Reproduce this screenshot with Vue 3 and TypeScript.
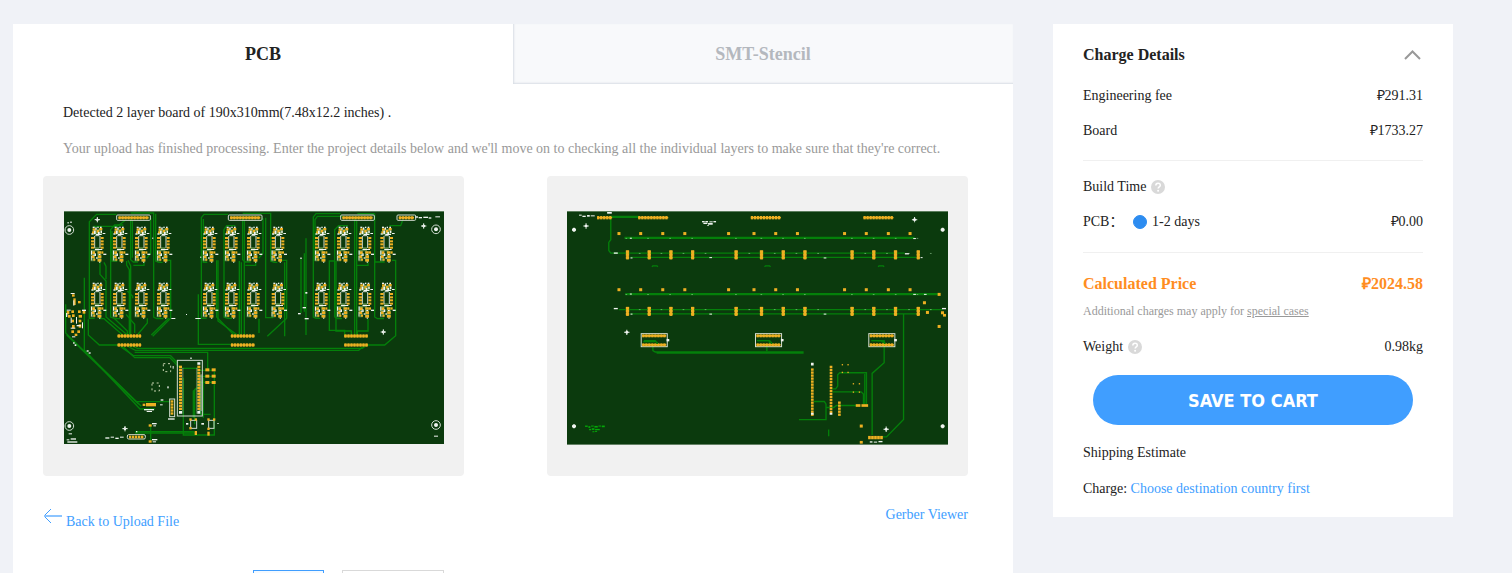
<script setup lang="ts">
import { ref } from 'vue'

type Pad = [number, number, number, number]

const tab = ref('pcb')
const buildTime = ref('fast')

const range = (n: number): number[] => Array.from({ length: n }, (_, i) => i)

// Positions of the repeated driver cells on the top layer
const cellCols = [100, 166, 232, 298, 436, 502, 568, 642, 772, 838, 903, 968]
const cells = [47, 215].flatMap((y) => cellCols.map((x) => ({ x, y })))
const cellPads: Pad[] = [
  [-14, 5, 9, 7], [-2, 10, 7, 8], [6, 4, 9, 7], [-16, 14, 6, 7],
  [-19, 31, 10, 6], [-19, 41, 10, 6], [-19, 50, 10, 6], [-19, 60, 10, 6],
  [10, 31, 9, 6], [10, 41, 9, 6], [10, 50, 9, 6], [10, 60, 9, 6],
  [-15, 74, 8, 8], [-17, 86, 8, 8], [-12, 96, 6, 6],
  [1, 74, 10, 7], [2, 86, 10, 8], [1, 97, 11, 8], [12, 74, 6, 7],
]
const cellSilk: Pad[] = [
  [-14, 0, 6, 4], [-6, 2, 4, 7], [-10, 12, 5, 10], [0, 0, 4, 4], [8, 0, 5, 4],
  [2, 16, 5, 6], [10, 12, 4, 7], [-4, 22, 17, 3], [-18, 20, 6, 4],
  [16, 19, 8, 3], [-7, 67, 22, 3], [-19, 72, 3, 12], [-19, 88, 2, 13],
  [-8, 80, 4, 8], [-4, 92, 5, 4], [18, 81, 9, 4], [4, 82, 5, 3], [-12, 84, 5, 3], [5, 105, 4, 3],
]
const headers = [
  { x: 158, n: 11 }, { x: 493, n: 11 }, { x: 830, n: 11 }, { x: 999, n: 6 },
]
const strips = [160, 500, 840]

const topTraces = [
  'M158 10H98L76 32V322H92', 'M73 325V372L106 402H163', 'M88 46H160L184 28',
  'M178 42H152L140 56V318L152 323H168', 'M144 60V150H160', 'M200 24V146L208 153H222', 'M205 28V140',
  'M260 20V126L248 142', 'M200 6H269V318L278 323H298', 'M275 8V150L284 154H296',
  'M298 148H320V322L266 376', 'M314 322L262 372', 'M108 150V190L126 210V318L190 372', 'M120 154L126 166V205',
  'M188 150V162L196 176V372', 'M192 148L200 165V372', 'M240 153V163H208', 'M80 249H88', 'M190 240L206 256V262',
  'M186 310L212 340V366', 'M250 322V336L220 372', 'M152 323L190 360V372', 'M403 250V400H500', 'M105 323H120L176 372',
  'M493 10H420L412 20V322H428', 'M418 24V154H430', 'M514 44H488L480 56V318L490 322H504', 'M536 20V146L544 153H560', 'M541 28V372',
  'M597 22V126L584 142', 'M536 7H620V150L630 154H640', 'M605 20V320H628', 'M649 148H668V322L610 376', 'M662 154V376',
  'M458 148V318L510 372', 'M462 148V330L520 372', 'M526 150V372', 'M532 154V372', 'M575 153V163H544', 'M585 323V366',
  'M726 82V372', 'M721 127V302', 'M711 142V306',
  'M830 8H756L748 18V318L756 322H768', 'M836 16H760L753 26V150', 'M852 44H824L812 56V318L820 323H834', 'M810 150H796V358H842V372',
  'M816 150V360H862V372', 'M872 24V372', 'M878 30V374', 'M932 8V153H962', 'M932 140V318L940 323H960', 'M880 8H932', 'M912 154V163H878', 'M912 323V360H880V372',
  'M984 148H995V374L962 402H905', 'M1016 28L1010 44H976',
  'M5 280V366L216 572H318', 'M61 200V417L228 594H273', 'M8 372L224 580', 'M67 426L232 586',
  'M205 405L220 412H895L906 404', 'M190 405L214 418H884L896 408', 'M178 407L212 440H318L344 467', 'M170 407L208 434H320L340 455',
  'M212 424H431V477', 'M451 482V672H358V500', 'M213 662H390', 'M213 666H396', 'M260 640V690', 'M388 620V540L402 530V480', 'M392 640V536L404 526',
  'M356 472H402', 'M410 510V610H440', 'M418 500V620', 'M404 478H450M404 496H450M404 514H450',
]
const topPads: Pad[] = [
  [24, 250, 8, 7], [28, 262, 7, 20], [42, 270, 8, 7], [8, 300, 8, 10], [22, 298, 8, 8], [42, 298, 8, 8], [56, 300, 8, 8],
  [12, 312, 8, 8], [24, 310, 8, 8], [44, 312, 10, 8], [22, 326, 8, 8], [44, 326, 8, 8], [24, 342, 8, 10], [44, 340, 8, 10],
  [22, 358, 8, 8], [40, 358, 8, 8], [32, 368, 8, 7],
  [424, 472, 12, 9], [443, 472, 12, 9], [424, 491, 12, 9], [443, 491, 12, 9], [424, 510, 12, 9], [443, 510, 12, 9],
  [236, 578, 8, 7], [246, 576, 30, 10], [254, 640, 9, 7], [254, 688, 9, 7],
  [376, 622, 7, 7], [392, 622, 7, 7], [376, 648, 7, 7], [392, 660, 7, 12], [430, 622, 7, 7], [447, 622, 7, 7], [430, 650, 7, 7], [430, 662, 7, 12],
]
const topSilk: Pad[] = [
  [10, 34, 5, 3], [18, 32, 6, 3], [20, 246, 12, 3], [28, 268, 3, 16], [8, 296, 12, 3], [6, 306, 4, 12], [54, 296, 12, 4],
  [20, 320, 3, 16], [36, 318, 3, 20], [38, 342, 12, 4], [20, 350, 14, 3], [54, 334, 3, 18], [24, 376, 10, 3],
  [27, 394, 5, 4], [32, 400, 5, 5], [68, 418, 6, 4], [74, 424, 6, 4],
  [1054, 16, 8, 4], [1064, 18, 10, 4], [1078, 17, 14, 4], [1094, 19, 8, 4], [1114, 16, 14, 3],
  [724, 243, 6, 5], [716, 288, 10, 4], [702, 306, 8, 4], [722, 321, 12, 4], [708, 140, 6, 3],
  [322, 321, 12, 3], [366, 309, 3, 3], [394, 321, 16, 3], [264, 80, 4, 3], [408, 137, 4, 3],
  [378, 440, 6, 3], [326, 465, 3, 8], [290, 565, 8, 4], [288, 580, 8, 3], [240, 594, 30, 4], [248, 600, 16, 3],
  [124, 679, 12, 4], [140, 677, 10, 3], [154, 680, 10, 4], [168, 677, 11, 3], [8, 685, 8, 3], [20, 682, 16, 4], [10, 691, 30, 4],
  [14, 667, 10, 3], [264, 636, 14, 4], [268, 643, 8, 3], [264, 684, 16, 4], [266, 691, 10, 3], [312, 622, 20, 4],
  [366, 636, 7, 5], [412, 636, 8, 5], [460, 636, 4, 3], [1110, 674, 12, 3], [310, 526, 4, 6], [216, 660, 4, 4],
]

// Bottom layer
const dotXs = [155, 220, 286, 352, 483, 559, 624, 689, 830, 895, 961, 1026]
const barXs = [181, 246, 311, 376, 506, 582, 647, 712, 853, 918, 983, 1051]
const bottomTraces = [
  'M131 19H215M131 16H215', 'M131 22V86L125 94V118L131 126H1010', 'M190 139H1045',
  'M172 79H1040M172 82H1040', 'M174 247H1116M174 250H1116', 'M155 295H1124', 'M190 308H1050', 'M1007 308V624L956 676H940',
  'M257 398V418L264 422H708M268 425H708', 'M598 398V420', 'M928 388H949V454L913 486V670', 'M911 388H940L949 396',
  'M228 391H266', 'M568 388H606V396', 'M794 532H804L810 524V490L816 484H896V578', 'M891 488V580',
  'M794 541H880L887 548V578', 'M738 570H770L775 578V624H694', 'M775 588H798L806 582H870', 'M783 654V674',
]
const bottomPads: Pad[] = [
  [1065, 270, 9, 9], [1109, 245, 9, 9], [1074, 299, 9, 9], [1119, 300, 9, 9], [1125, 308, 9, 8], [1109, 341, 9, 9],
  [864, 578, 14, 8], [881, 578, 20, 8], [876, 639, 9, 9], [876, 688, 9, 8],
  [822, 458, 4, 4], [839, 458, 4, 4], [822, 481, 4, 4], [839, 481, 4, 4], [855, 515, 4, 4], [873, 515, 4, 4], [855, 540, 4, 4], [873, 540, 4, 4],
]
const bottomSilk: Pad[] = [
  [36, 11, 8, 3], [46, 14, 10, 4], [60, 12, 8, 5], [71, 13, 12, 3], [120, 3, 14, 5],
  [404, 30, 8, 4], [414, 30, 8, 4], [426, 31, 10, 3], [438, 30, 8, 4], [408, 35, 12, 4], [422, 36, 14, 5], [420, 42, 4, 3],
  [140, 124, 12, 4], [1011, 126, 12, 4], [140, 290, 12, 4], [1122, 290, 12, 4],
  [190, 139, 6, 3], [426, 138, 8, 3], [768, 139, 8, 3], [190, 307, 6, 3], [426, 307, 8, 3], [768, 307, 8, 3],
  [188, 80, 6, 3], [188, 247, 6, 3], [1036, 81, 8, 3], [1036, 248, 8, 3], [1068, 248, 8, 3], [1058, 138, 6, 3],
  [906, 689, 8, 4], [918, 690, 10, 3], [932, 688, 12, 4],
]
const copperText: Pad[] = [
  [54, 642, 8, 4], [64, 644, 6, 5], [72, 642, 8, 3], [82, 643, 10, 5], [94, 642, 8, 3], [104, 642, 9, 5],
  [66, 652, 6, 4], [74, 650, 8, 5], [84, 652, 14, 4], [76, 659, 6, 3], [84, 658, 6, 3],
]
const sockets = [222, 564, 903]
</script>

<template>
  <div class="page">
    <main class="quote">
      <nav class="tabs">
        <button type="button" class="tab" :class="{ active: tab === 'pcb' }" @click="tab = 'pcb'">PCB</button>
        <button type="button" class="tab" :class="{ active: tab === 'smt' }" @click="tab = 'smt'">SMT-Stencil</button>
      </nav>

      <div class="messages">
        <p class="detected">Detected 2 layer board of 190x310mm(7.48x12.2 inches) .</p>
        <p class="hint">Your upload has finished processing. Enter the project details below and we'll move on to checking all the individual layers to make sure that they're correct.</p>
      </div>

      <div class="previews">
        <div class="preview top">
          <svg class="board" viewBox="0 0 1140 699" role="img" aria-label="Top layer">
            <rect class="base" width="1140" height="699" />
            <path v-for="(d, i) in topTraces" :key="'t' + i" class="trace" :d="d" />
            <g v-for="(c, i) in cells" :key="'c' + i" :transform="`translate(${c.x} ${c.y})`">
              <path class="glow" d="M-20 70h13v34h-13zM-8 62h14v12h-14zM-14 6h28v18h-28zM0 74h12v30h-12z" />
              <path class="outline" d="M-8 28V64M8 28V64M-6 27H6" />
              <rect v-for="(p, j) in cellPads" :key="'p' + j" class="pad" :x="p[0]" :y="p[1]" :width="p[2]" :height="p[3]" />
              <rect v-for="(p, j) in cellSilk" :key="'s' + j" class="silk" :x="p[0]" :y="p[1]" :width="p[2]" :height="p[3]" />
            </g>
            <g v-for="h in headers" :key="'h' + h.x">
              <rect class="frame" :x="h.x" y="12" :width="h.n * 9 + 2" height="16" rx="3" />
              <rect class="pad" :x="h.x + 5" y="17" :width="h.n * 9 - 8" height="6" />
              <rect v-for="k in range(h.n - 1)" :key="k" class="pad" :x="h.x + 6 + k * 9" y="16" width="6" height="9" />
            </g>
            <g v-for="s in strips" :key="'st' + s">
              <template v-for="y in [370, 397]" :key="y">
                <rect class="pad" :x="s" :y="y + 3" width="72" height="4" />
                <rect v-for="k in range(8)" :key="k" class="pad" :x="s + 1 + k * 9" :y="y" width="7" height="10" />
              </template>
            </g>
            <rect class="outline" x="340" y="448" width="75" height="167" />
            <path class="haze" d="M404 490h10v110h-10z" />
            <g v-for="k in range(15)" :key="'m' + k">
              <rect class="pad" x="345" :y="464 + k * 9" width="9" height="7" />
              <rect class="pad" x="400" :y="464 + k * 9" width="9" height="7" />
            </g>
            <path class="haze" d="M355 470h3v138h-3zM397 470h3v138h-3z" />
            <path class="silk" d="M345 600h9v8h-9zM400 600h9v8h-9zM400 454h9v7h-9z" />
            <rect class="frame" x="317" y="564" width="15" height="53" />
            <rect v-for="k in range(5)" :key="'v' + k" class="pad" x="320" :y="568 + k * 9" width="8" height="7" />
            <rect class="frame" x="190" y="671" width="54" height="13" rx="4" />
            <rect v-for="k in range(5)" :key="'w' + k" class="pad" :x="195 + k * 9" y="674" width="7" height="8" />
            <rect class="dashed" x="298" y="458" width="22" height="24" />
            <rect class="dashed" x="264" y="516" width="22" height="24" />
            <rect class="outline" x="380" y="628" width="18" height="24" />
            <rect class="outline" x="434" y="628" width="16" height="24" />
            <rect v-for="(p, i) in topPads" :key="'tp' + i" class="pad" :x="p[0]" :y="p[1]" :width="p[2]" :height="p[3]" />
            <rect v-for="(p, i) in topSilk" :key="'ts' + i" class="silk" :x="p[0]" :y="p[1]" :width="p[2]" :height="p[3]" />
            <g v-for="(f, i) in [[16, 57], [1116, 55], [16, 645], [1116, 642]]" :key="'f' + i">
              <circle class="outline" :cx="f[0]" :cy="f[1]" r="13" />
              <circle class="silk" :cx="f[0]" :cy="f[1]" r="6" />
            </g>
            <path v-for="(f, i) in [[100, 26], [1079, 45], [958, 363], [183, 653]]" :key="'x' + i" class="cross" :d="`M${f[0] - 8} ${f[1]}h16m-8 -8v16m-4 -8l4 -4l4 4l-4 4z`" />
            <path class="edge" d="M0 1H1140" />
          </svg>
        </div>

        <div class="preview">
          <svg class="board" viewBox="0 0 1140 699" role="img" aria-label="Bottom layer">
            <rect class="base" width="1140" height="699" />
            <path v-for="(d, i) in bottomTraces" :key="'t' + i" class="trace" :d="d" />
            <g v-for="x in dotXs" :key="'d' + x">
              <rect class="pad" :x="x - 4" y="63" width="9" height="9" />
              <rect class="pad" :x="x - 4" y="231" width="9" height="9" />
              <path class="mark" :d="`M${x + 20} 82h5M${x + 20} 250h5M${x + 60} 127h5M${x + 60} 295h5`" />
            </g>
            <g v-for="x in barXs" :key="'b' + x">
              <template v-for="y in [118, 287]" :key="y">
                <rect class="pad" :x="x - 4" :y="y" width="8" height="27" />
                <rect v-for="k in range(3)" :key="k" class="pad" :x="x - 5" :y="y + k * 9" width="10" height="7" />
              </template>
            </g>
            <g v-for="(h, i) in [[90, 5], [213, 10], [550, 10], [887, 10]]" :key="'h' + i">
              <rect class="pad" :x="h[0]" y="18" :width="h[1] * 9" height="4" />
              <rect v-for="k in range(h[1])" :key="k" class="pad" :x="h[0] + k * 9" y="15" width="7" height="10" />
            </g>
            <path v-for="x in [254, 591, 931]" :key="'n' + x" class="trace" :d="`M${x} 167l3 -3h12l3 3`" />
            <g v-for="s in sockets" :key="'s' + s">
              <rect class="frame" :x="s" y="367" :width="78" height="39" />
              <template v-for="y in [369, 396]" :key="y">
                <rect class="pad" :x="s + 3" :y="y + 2" width="72" height="5" />
                <rect v-for="k in range(8)" :key="k" class="pad" :x="s + 3 + k * 9" :y="y" width="7" height="9" />
              </template>
              <path class="silk" :d="`M${s + 76} 383h8v7h-8z`" />
              <path class="trace" :d="`M${s + 8} 388h34l6 6v4`" />
            </g>
            <g v-for="k in range(16)" :key="'m' + k">
              <rect class="pad" x="730" :y="471 + k * 9" width="8" height="7" />
              <rect class="pad" x="786" :y="463 + k * 9" width="8" height="7" />
            </g>
            <path class="silk" d="M730 454h8v8h-8zM730 604h8v6h-8zM786 604h8v6h-8z" />
            <rect v-for="k in range(5)" :key="'v' + k" class="pad" x="811" :y="570 + k * 9" width="8" height="7" />
            <rect v-for="k in range(5)" :key="'w' + k" class="pad" :x="901 + k * 9" y="673" width="8" height="10" />
            <rect v-for="(p, i) in bottomPads" :key="'bp' + i" class="pad" :x="p[0]" :y="p[1]" :width="p[2]" :height="p[3]" />
            <rect v-for="(p, i) in bottomSilk" :key="'bs' + i" class="silk" :x="p[0]" :y="p[1]" :width="p[2]" :height="p[3]" />
            <rect v-for="(p, i) in copperText" :key="'ct' + i" class="copper" :x="p[0]" :y="p[1]" :width="p[2]" :height="p[3]" />
            <path v-for="(f, i) in [[21, 56], [1124, 56], [21, 644], [1124, 644]]" :key="'f' + i" class="silk" :d="`M${f[0] - 6} ${f[1] - 2}l4 -4h4l4 4v4l-4 4h-4l-4 -4z`" />
            <path v-for="(f, i) in [[57, 45], [1040, 26], [179, 363], [955, 653]]" :key="'x' + i" class="cross" :d="`M${f[0] - 8} ${f[1]}h16m-8 -8v16m-4 -8l4 -4l4 4l-4 4z`" />
            <path class="edge" d="M0 1H1140" />
          </svg>
        </div>
      </div>

      <div class="links">
        <a href="#" class="back">
          <svg width="19" height="16" viewBox="0 0 19 16" aria-hidden="true">
            <path d="M8 1L1 8L8 15" fill="none" stroke="#409eff" stroke-width="1" />
            <path d="M1 8H19" stroke="#8cc4ff" stroke-width="2" />
          </svg>
          <span>Back to Upload File</span>
        </a>
        <a href="#">Gerber Viewer</a>
      </div>

      <div class="options">
        <button type="button" class="option chosen" aria-label="Option 1"></button>
        <button type="button" class="option wide" aria-label="Option 2"></button>
      </div>
    </main>

    <aside class="charges">
      <div class="row title">
        <h2>Charge Details</h2>
        <button type="button" class="fold" aria-label="Collapse">
          <svg width="17" height="10" viewBox="0 0 17 10"><path d="M1 9L8.500 1.500L16 9" fill="none" stroke="#999" stroke-width="2" /></svg>
        </button>
      </div>
      <div class="row"><span>Engineering fee</span><span>₽291.31</span></div>
      <div class="row"><span>Board</span><span>₽1733.27</span></div>
      <hr />
      <div class="row build">
        <span class="with-help">Build Time
          <svg class="help" viewBox="0 0 14 14"><circle cx="7" cy="7" r="7" fill="#d9d9d9" /><path d="M4.800 5.400C4.800 2.300 9.300 2.500 9.300 5.200C9.300 6.800 7.100 6.900 7.100 8.600" fill="none" stroke="#fff" stroke-width="1.500" /><circle cx="7.100" cy="10.800" r="1" fill="#fff" /></svg>
        </span>
      </div>
      <div class="row">
        <span class="lead">PCB：</span>
        <label class="choice"><input v-model="buildTime" type="radio" name="build" value="fast" />1-2 days</label>
        <span>₽0.00</span>
      </div>
      <hr class="second" />
      <div class="row total"><strong>Calculated Price</strong><strong>₽2024.58</strong></div>
      <p class="note">Additional charges may apply for <a href="#">special cases</a></p>
      <div class="row weight">
        <span class="with-help">Weight
          <svg class="help" viewBox="0 0 14 14"><circle cx="7" cy="7" r="7" fill="#d9d9d9" /><path d="M4.800 5.400C4.800 2.300 9.300 2.500 9.300 5.200C9.300 6.800 7.100 6.900 7.100 8.600" fill="none" stroke="#fff" stroke-width="1.500" /><circle cx="7.100" cy="10.800" r="1" fill="#fff" /></svg>
        </span>
        <span>0.98kg</span>
      </div>
      <button type="button" class="save">SAVE TO CART</button>
      <div class="row">Shipping Estimate</div>
      <div class="row charge"><span>Charge: <a href="#">Choose destination country first</a></span></div>
    </aside>
  </div>
</template>

<style>
body {
  margin: 0;
  background: #f0f2f7;
}
</style>

<style scoped>
.page {
  box-sizing: border-box;
  height: 100vh;
  overflow: hidden;
  display: grid;
  grid-template-columns: minmax(0, 5fr) minmax(0, 2fr);
  gap: 40px;
  align-items: start;
  padding: 24px 59px 0 13px;
  background: #f0f2f7;
  color: #222;
  font: 14px/20px "Liberation Serif", "Noto Sans CJK SC", serif;
}
button {
  font-family: inherit;
  padding: 0;
  border: 0;
  background: none;
  cursor: pointer;
}
a {
  color: #409eff;
  text-decoration: none;
}
p, h2 {
  margin: 0;
}
.quote {
  background: #fff;
}
.tabs {
  display: grid;
  grid-template-columns: 1fr 1fr;
}
.tab {
  height: 60px;
  font-size: 18px;
  font-weight: bold;
  color: #b4b8be;
  background: #f8f9fb;
  box-shadow: inset 1px -1px 2px #d9dee5;
}
.tab.active {
  color: #222;
  background: #fff;
  box-shadow: none;
}
.messages {
  padding: 19px 50px 17px;
  display: grid;
  gap: 16px;
}
.hint {
  color: #999;
}
.previews {
  display: grid;
  grid-template-columns: 1fr 1fr;
  gap: 83px;
  padding: 0 45px 0 30px;
}
.preview {
  box-sizing: border-box;
  height: 300px;
  padding: 35px 20px 0;
  border-radius: 4px;
  background: #f1f1f1;
}
.preview.top {
  padding-left: 21px;
}
.board {
  display: block;
  width: 100%;
}
.base { fill: #0b3a0d; }
.trace { fill: none; stroke: #04800a; stroke-width: 4; }
.pad { fill: #eeb022; }
.silk { fill: #f0f4f0; }
.copper { fill: #04a808; }
.glow { fill: #7aa860; opacity: 0.7; }
.haze { fill: #b9c9b9; opacity: 0.55; }
.outline { fill: none; stroke: #d2dcd2; stroke-width: 3; }
.frame { fill: none; stroke: #d5ddd0; stroke-width: 3; }
.dashed { fill: none; stroke: #c8d4b0; stroke-width: 3; stroke-dasharray: 6 8; }
.cross { fill: none; stroke: #f0f4f0; stroke-width: 3; }
.mark { stroke: #8fc08f; stroke-width: 2; }
.edge { stroke: #9db39d; stroke-width: 2; }
.links {
  display: flex;
  justify-content: space-between;
  align-items: flex-start;
  padding: 29px 45px 0 30px;
}
.back {
  display: flex;
  gap: 4px;
}
.back svg {
  margin-top: 3px;
}
.back span {
  padding-top: 7px;
}
.options {
  display: flex;
  gap: 18px;
  padding: 38px 0 30px 240px;
}
.option {
  width: 71px;
  height: 32px;
  border: 1px solid #d9d9d9;
}
.option.wide {
  width: 102px;
}
.option.chosen {
  border-color: #409eff;
  background: #f5faff;
}
.charges {
  padding: 13px 30px 11px;
  background: #fff;
}
.row {
  display: flex;
  align-items: center;
  justify-content: space-between;
  min-height: 35px;
}
.title {
  margin-bottom: 6px;
}
h2, .total {
  font-size: 16px;
}
.fold {
  display: flex;
  margin-right: 2px;
}
hr {
  height: 1px;
  margin: 12px 0 8px;
  border: 0;
  background: #f0f0f0;
}
hr.second {
  margin: 13px 0;
}
.with-help {
  display: flex;
  align-items: center;
  gap: 5px;
}
.help {
  width: 14px;
  height: 14px;
}
.lead {
  width: 50px;
}
.choice {
  display: flex;
  align-items: center;
  gap: 5px;
  flex: 1;
}
.choice input {
  appearance: none;
  width: 14px;
  height: 14px;
  margin: 0;
  border-radius: 50%;
  border: 1px solid #ccc;
}
.choice input:checked {
  border-color: #2d8cf0;
  background: #2d8cf0;
}
.total {
  color: #ff8d1f;
}
.note {
  font-size: 12px;
  color: #999;
}
.note a {
  color: inherit;
  text-decoration: underline;
}
.weight {
  margin: 8px 0 11px;
}
.save {
  display: block;
  width: calc(100% - 20px);
  height: 50px;
  margin: 0 10px 10px;
  border-radius: 25px;
  background: #409eff;
  color: #fff;
  font: bold 18px "DejaVu Sans Condensed", "Noto Sans", sans-serif;
}
.charge {
  margin-top: 1px;
}
</style>
